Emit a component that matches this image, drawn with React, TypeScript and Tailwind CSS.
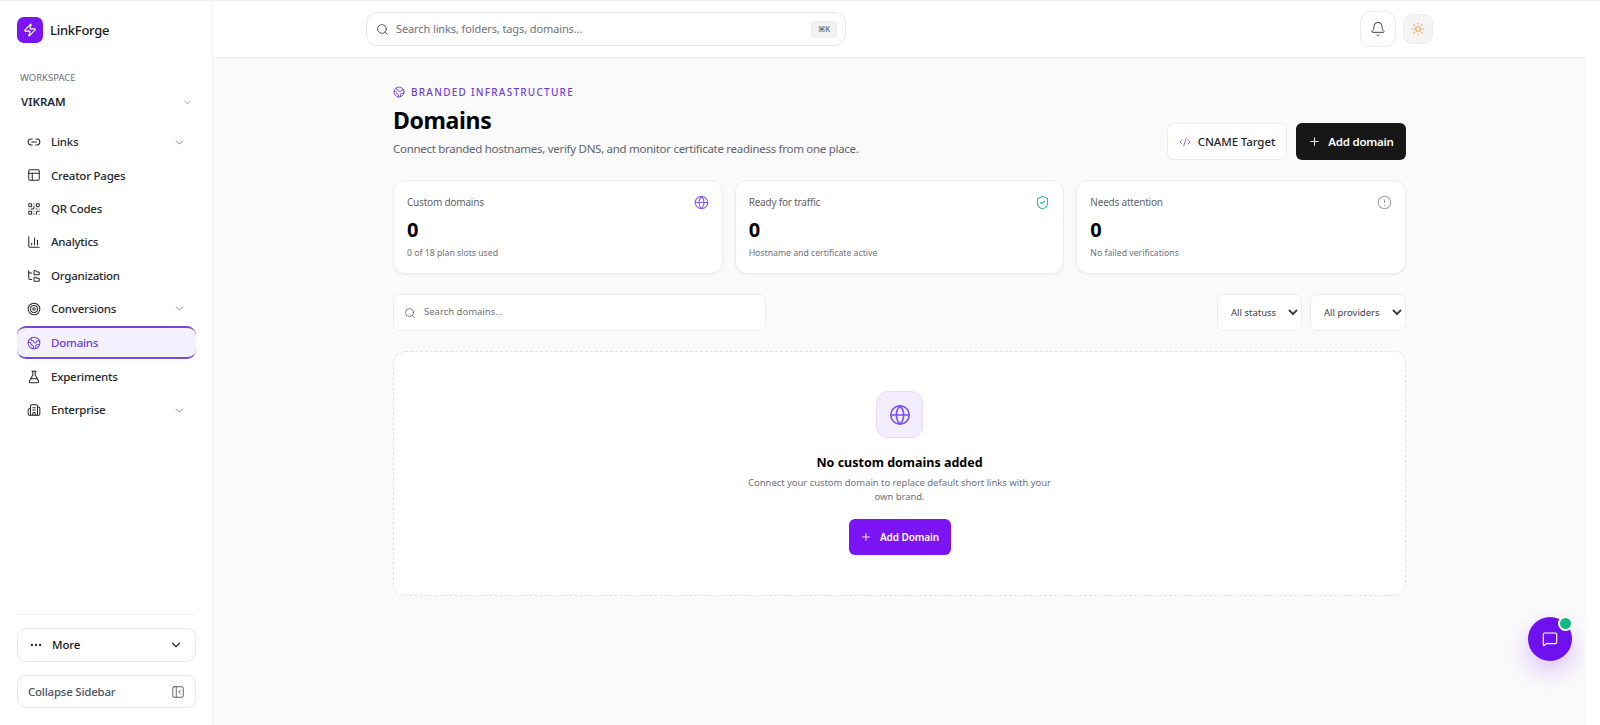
import React from "react";
import {
  Zap, ChevronDown, Link2, PanelsTopLeft, QrCode, ChartColumn, FolderTree, Target, Earth, FlaskConical, Building2,
  Ellipsis, PanelLeftClose, Search, Bell, Sun, CodeXml, Plus, Globe, ShieldCheck, CircleAlert, MessageSquare,
} from "lucide-react";

const nav = [
  { label: "Links", icon: Link2, chevron: true },
  { label: "Creator Pages", icon: PanelsTopLeft },
  { label: "QR Codes", icon: QrCode },
  { label: "Analytics", icon: ChartColumn },
  { label: "Organization", icon: FolderTree },
  { label: "Conversions", icon: Target, chevron: true },
  { label: "Domains", icon: Earth, active: true },
  { label: "Experiments", icon: FlaskConical },
  { label: "Enterprise", icon: Building2, chevron: true },
];

const stats = [
  { label: "Custom domains", sub: "0 of 18 plan slots used", icon: Globe, color: "text-[#8b5cf6]" },
  { label: "Ready for traffic", sub: "Hostname and certificate active", icon: ShieldCheck, color: "text-[#34c08e]" },
  { label: "Needs attention", sub: "No failed verifications", icon: CircleAlert, color: "text-[#9ca3af]" },
];

export default function App() {
  return (
    <div className="relative flex h-[725px] w-[1600px] overflow-hidden border-t border-[#efefef] bg-white font-['Noto_Sans','Open_Sans',sans-serif] text-[#111]">
      <aside className="flex w-[213px] shrink-0 flex-col border-r border-[#f0f0f0] bg-white pb-[17px] pl-[17px] pr-[16px] pt-[16px]">
        <div className="flex items-center gap-[7px]">
          <div className="flex h-[26px] w-[26px] items-center justify-center rounded-[7px] bg-[#7a14f0]">
            <Zap size={14} className="text-white" strokeWidth={2} />
          </div>
          <span className="text-[13px] font-medium leading-[26px] tracking-[-0.02em] text-[#1a1a1a]">LinkForge</span>
        </div>

        <div className="mt-[28px] pl-[3px] text-[9.5px] uppercase leading-[14px] text-[#71717a]">Workspace</div>
        <div className="mt-[8px] flex items-center justify-between pl-[4px] pr-[3px]">
          <span className="text-[11.5px] font-semibold leading-[18px] text-[#1f2937]">VIKRAM</span>
          <ChevronDown size={11} className="text-[#a1a1aa]" />
        </div>

        <nav className="mt-[15px] flex flex-col gap-[1.4px]">
          {nav.map((item) => {
            const Icon = item.icon;
            return (
              <div
                key={item.label}
                className={
                  item.active
                    ? "flex h-[33px] items-center gap-[10px] rounded-[9px] border-y-[2px] border-[#7247dc] bg-[#f5f0ff] pl-[10px] pr-[10px] text-[#6d3fd6]"
                    : "flex h-[32px] items-center gap-[10px] pl-[10px] pr-[10px] text-[#27272a]"
                }
              >
                <Icon size={14} strokeWidth={1.75} className="shrink-0" />
                <span className="flex-1 text-[11.5px] font-medium leading-none tracking-[-0.02em]">{item.label}</span>
                {item.chevron && <ChevronDown size={13} className="text-[#71717a]" strokeWidth={1.5} />}
              </div>
            );
          })}
        </nav>

        <div className="mt-auto border-t border-[#f0f0f0] pt-[13px]">
          <div className="flex h-[34px] items-center rounded-[9px] border border-[#e8e8e8] pl-[11px] pr-[12px]">
            <Ellipsis size={14} className="text-[#27272a]" />
            <span className="ml-[9px] flex-1 text-[11.5px] font-medium tracking-[-0.01em] text-[#18181b]">More</span>
            <ChevronDown size={14} className="text-[#27272a]" />
          </div>
          <div className="mt-[13px] flex h-[33px] items-center justify-between rounded-[9px] border border-[#e8e8e8] pl-[10px] pr-[10px]">
            <span className="text-[11.5px] font-medium tracking-[-0.02em] text-[#4b5563]">Collapse Sidebar</span>
            <PanelLeftClose size={14} className="text-[#52525b]" strokeWidth={1.5} />
          </div>
        </div>
      </aside>

      <div className="flex min-w-0 flex-1 flex-col bg-[#fafafa]">
        <header className="relative flex h-[57px] shrink-0 items-center border-b border-[#e8e8e8] bg-white">
          <div className="ml-[153px] flex h-[34px] w-[480px] items-center rounded-[11px] border border-[#e8e8e8] bg-white pl-[9px] pr-[8px]">
            <Search size={13} className="text-[#52525b]" strokeWidth={1.75} />
            <span className="ml-[7px] flex-1 text-[11px] tracking-[-0.01em] text-[#71717a]">Search links, folders, tags, domains...</span>
            <kbd className="flex h-[17px] w-[26px] items-center justify-center rounded-[4px] border border-[#ececec] bg-[#f3f3f3] font-['Noto_Sans','DejaVu_Sans',sans-serif] text-[8px] font-semibold text-[#6b7280]">⌘K</kbd>
          </div>
          <div className="ml-[514px] flex h-[36px] w-[36px] items-center justify-center rounded-[11px] border border-[#ececec] bg-white">
            <Bell size={16} strokeWidth={1.5} className="text-[#3f3f46]" />
          </div>
          <div className="ml-[7px] flex h-[30px] w-[30px] items-center justify-center rounded-[9px] border border-[#ececec] bg-[#f4f4f5]">
            <Sun size={14} strokeWidth={1.75} className="text-[#f59e4b]" />
          </div>
        </header>

        <main className="ml-[180px] w-[1013px] pt-[27px]">
          <div className="flex items-end justify-between">
            <div className="pb-[2px]">
              <div className="flex h-[14px] items-center gap-[6px] text-[#6d3fd6]">
                <Earth size={12} strokeWidth={1.75} />
                <span className="text-[10px] font-medium uppercase tracking-[0.125em]">Branded Infrastructure</span>
              </div>
              <h1 className="mt-[5px] text-[23px] font-bold leading-[32px] tracking-[-0.015em] text-black">Domains</h1>
              <p className="mt-[4px] text-[11.5px] leading-[18px] tracking-[-0.025em] text-[#63636e]">
                Connect branded hostnames, verify DNS, and monitor certificate readiness from one place.
              </p>
            </div>
            <div className="flex gap-[9px]">
              <div className="flex h-[37px] w-[120px] items-center justify-center gap-[7px] rounded-[7px] border border-[#ececec] bg-white">
                <CodeXml size={12} className="text-[#8b5cf6]" strokeWidth={1.75} />
                <span className="text-[11.5px] font-medium tracking-[-0.01em] text-[#27272a]">CNAME Target</span>
              </div>
              <div className="flex h-[37px] w-[110px] items-center justify-center gap-[7px] rounded-[6px] bg-[#171717]">
                <Plus size={13} className="text-[#e5e5e5]" />
                <span className="text-[11.5px] font-semibold tracking-[-0.02em] text-white">Add domain</span>
              </div>
            </div>
          </div>

          <div className="mt-[20px] grid grid-cols-3 gap-[12px]">
            {stats.map((s) => {
              const Icon = s.icon;
              return (
                <div key={s.label} className="h-[94px] rounded-[12px] border border-[#ececec] bg-white px-[13px] pt-[13px] shadow-[0_1px_2px_rgba(0,0,0,0.05)]">
                  <div className="flex items-center justify-between">
                    <span className="text-[10px] leading-[16px] tracking-[-0.02em] text-[#5f5f69]">{s.label}</span>
                    <Icon size={15} strokeWidth={1.75} className={s.color} />
                  </div>
                  <div className="mt-[6px] text-[20px] font-bold leading-[28px] text-black">0</div>
                  <div className="mt-[2px] text-[8.7px] leading-[14px] text-[#71717a]">{s.sub}</div>
                </div>
              );
            })}
          </div>

          <div className="mt-[20px] flex items-center justify-between">
            <div className="flex h-[37px] w-[373px] items-center rounded-[7px] border border-[#ececec] bg-white pl-[10px]">
              <Search size={12} className="text-[#52525b]" strokeWidth={1.5} />
              <span className="ml-[8px] text-[9.5px] text-[#71717a]">Search domains...</span>
            </div>
            <div className="flex gap-[8px]">
              <select defaultValue="All statuss" className="h-[37px] w-[85px] rounded-[7px] border border-[#ececec] bg-white pl-[9px] text-[9.5px] text-[#3f3f46]">
                <option>All statuss</option>
              </select>
              <select defaultValue="All providers" className="h-[37px] w-[96px] rounded-[7px] border border-[#ececec] bg-white pl-[9px] text-[9.5px] text-[#3f3f46]">
                <option>All providers</option>
              </select>
            </div>
          </div>

          <div className="mt-[20px] flex h-[245px] flex-col items-center rounded-[12px] border border-dashed border-[#e2e2e2] bg-white pt-[39px]">
            <div className="flex h-[47px] w-[47px] items-center justify-center rounded-[12px] border border-[#e6dcff] bg-[#f3eeff]">
              <Globe size={22} strokeWidth={1.75} className="text-[#7c4dff]" />
            </div>
            <h2 className="mt-[15px] text-[12.5px] font-bold leading-[20px] text-black">No custom domains added</h2>
            <p className="mt-[3px] w-[320px] text-center text-[9.5px] leading-[14px] tracking-[-0.005em] text-[#71717a]">
              Connect your custom domain to replace default short links with your own brand.
            </p>
            <div className="mt-[15px] flex h-[36px] w-[102px] items-center justify-center gap-[8px] rounded-[6px] bg-[#7a14f5]">
              <Plus size={12} className="text-[#f0e6ff]" />
              <span className="text-[10px] font-semibold tracking-[-0.01em] text-white">Add Domain</span>
            </div>
          </div>
        </main>
      </div>

      <div className="w-[15px] shrink-0 bg-white" />

      <div className="absolute left-[1528px] top-[616px] flex h-[44px] w-[44px] items-center justify-center rounded-full bg-[#6f10ee] shadow-[0_10px_24px_rgba(122,20,245,0.25)]">
        <MessageSquare size={16} strokeWidth={1.75} className="text-white" />
        <span className="absolute -right-[1px] -top-[1px] h-[15px] w-[15px] rounded-full border-2 border-white bg-[#10b981]" />
      </div>
    </div>
  );
}
